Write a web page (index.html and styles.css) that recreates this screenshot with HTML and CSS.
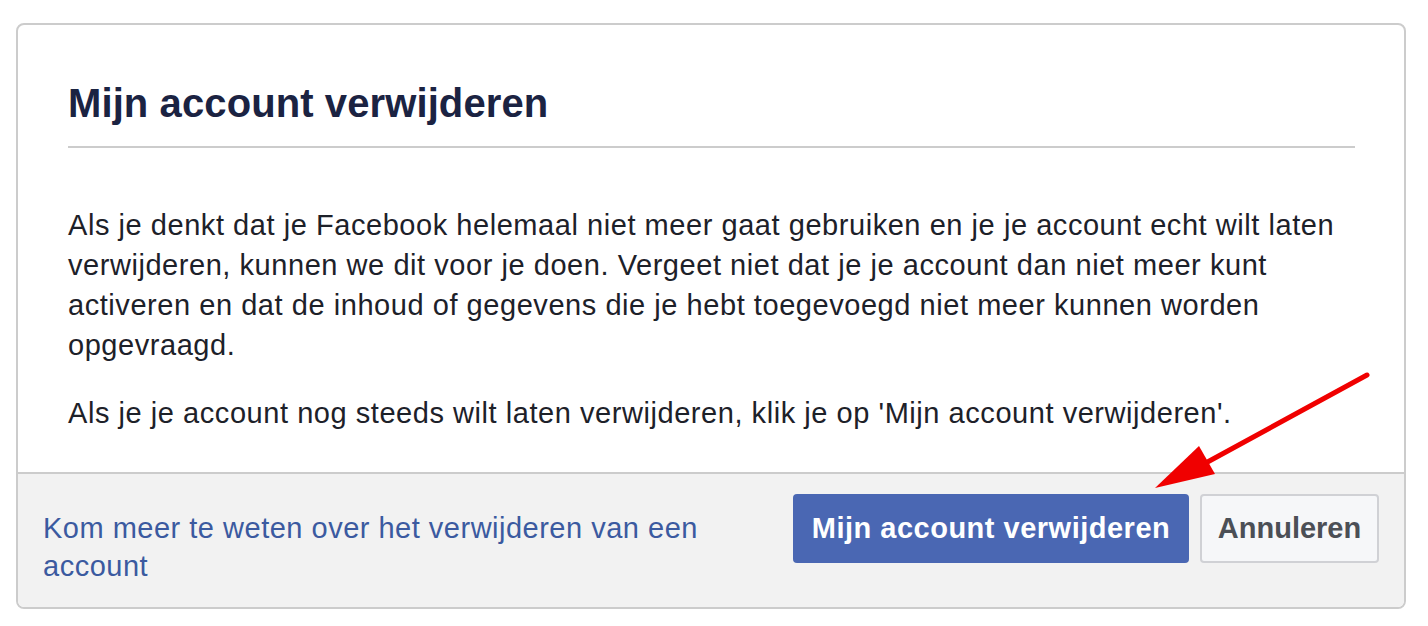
FILE: index.html
```html
<!DOCTYPE html>
<html lang="nl">
<head>
<meta charset="utf-8">
<title>Mijn account verwijderen</title>
<link rel="stylesheet" href="styles.css">
</head>
<body>
<div class="dialog">
  <div class="dialog-head">
    <h2 class="title">Mijn account verwijderen</h2>
  </div>
  <div class="dialog-body">
    <p>Als je denkt dat je Facebook helemaal niet meer gaat gebruiken en je je account echt wilt laten verwijderen, kunnen we dit voor je doen. Vergeet niet dat je je account dan niet meer kunt activeren en dat de inhoud of gegevens die je hebt toegevoegd niet meer kunnen worden opgevraagd.</p>
    <p>Als je je account nog steeds wilt laten verwijderen, klik je op 'Mijn account verwijderen'.</p>
  </div>
  <div class="dialog-foot">
    <a class="learn" href="#">Kom meer te weten over het verwijderen van een account</a>
    <div class="actions">
      <button class="btn btn-primary">Mijn account verwijderen</button>
      <button class="btn btn-cancel">Annuleren</button>
    </div>
  </div>
</div>
<svg class="arrow" width="1428" height="626" viewBox="0 0 1428 626" aria-hidden="true">
  <line x1="1367" y1="375" x2="1202" y2="465" stroke="#f00000" stroke-width="5" stroke-linecap="round"/>
  <polygon points="1155,488 1199,446 1215,474" fill="#f00000"/>
</svg>
</body>
</html>
```
FILE: styles.css
```css
html, body {
  margin: 0;
  padding: 0;
  background: #ffffff;
}
body {
  font-family: "Liberation Sans", Arial, Helvetica, sans-serif;
  position: relative;
  width: 1428px;
  height: 626px;
  overflow: hidden;
}
.dialog {
  box-sizing: border-box;
  width: 1390px;
  margin: 23px 0 0 16px;
  border: 2px solid #cccccc;
  border-radius: 8px;
  overflow: hidden;
  background: #ffffff;
}
.dialog-head {
  padding: 54px 49px 0 50px;
}
.title {
  margin: 0;
  padding-bottom: 19px;
  border-bottom: 2px solid #cccccc;
  font-size: 40px;
  line-height: 48px;
  font-weight: bold;
  color: #1b2342;
  letter-spacing: 0.1px;
}
.dialog-body {
  padding: 57px 49px 39px 50px;
  color: #1d2129;
  font-size: 29px;
  letter-spacing: 0.55px;
  line-height: 40px;
}
.dialog-body p {
  margin: 0;
}
.dialog-body p + p {
  margin-top: 28px;
}
.dialog-foot {
  display: flex;
  align-items: flex-start;
  justify-content: space-between;
  background: #f2f2f2;
  border-top: 2px solid #cccccc;
  padding: 20px 25px 22px 25px;
}
.learn {
  display: block;
  margin-top: 15px;
  max-width: 690px;
  font-size: 29px;
  letter-spacing: 0.5px;
  line-height: 38px;
  color: #3b5aa0;
  text-decoration: none;
}
.actions {
  display: flex;
  gap: 11px;
}
.btn {
  box-sizing: border-box;
  height: 69px;
  border-radius: 4px;
  font-family: "Liberation Sans", Arial, Helvetica, sans-serif;
  font-weight: bold;
  font-size: 29px;
  padding: 0;
  cursor: pointer;
}
.btn-primary {
  width: 396px;
  background: #4a67b3;
  border: 0;
  color: #ffffff;
  letter-spacing: 0.5px;
}
.btn-cancel {
  width: 179px;
  background: #f6f7f9;
  border: 2px solid #d0d1d5;
  color: #4b4f56;
}
.arrow {
  position: absolute;
  left: 0;
  top: 0;
  pointer-events: none;
}
```
